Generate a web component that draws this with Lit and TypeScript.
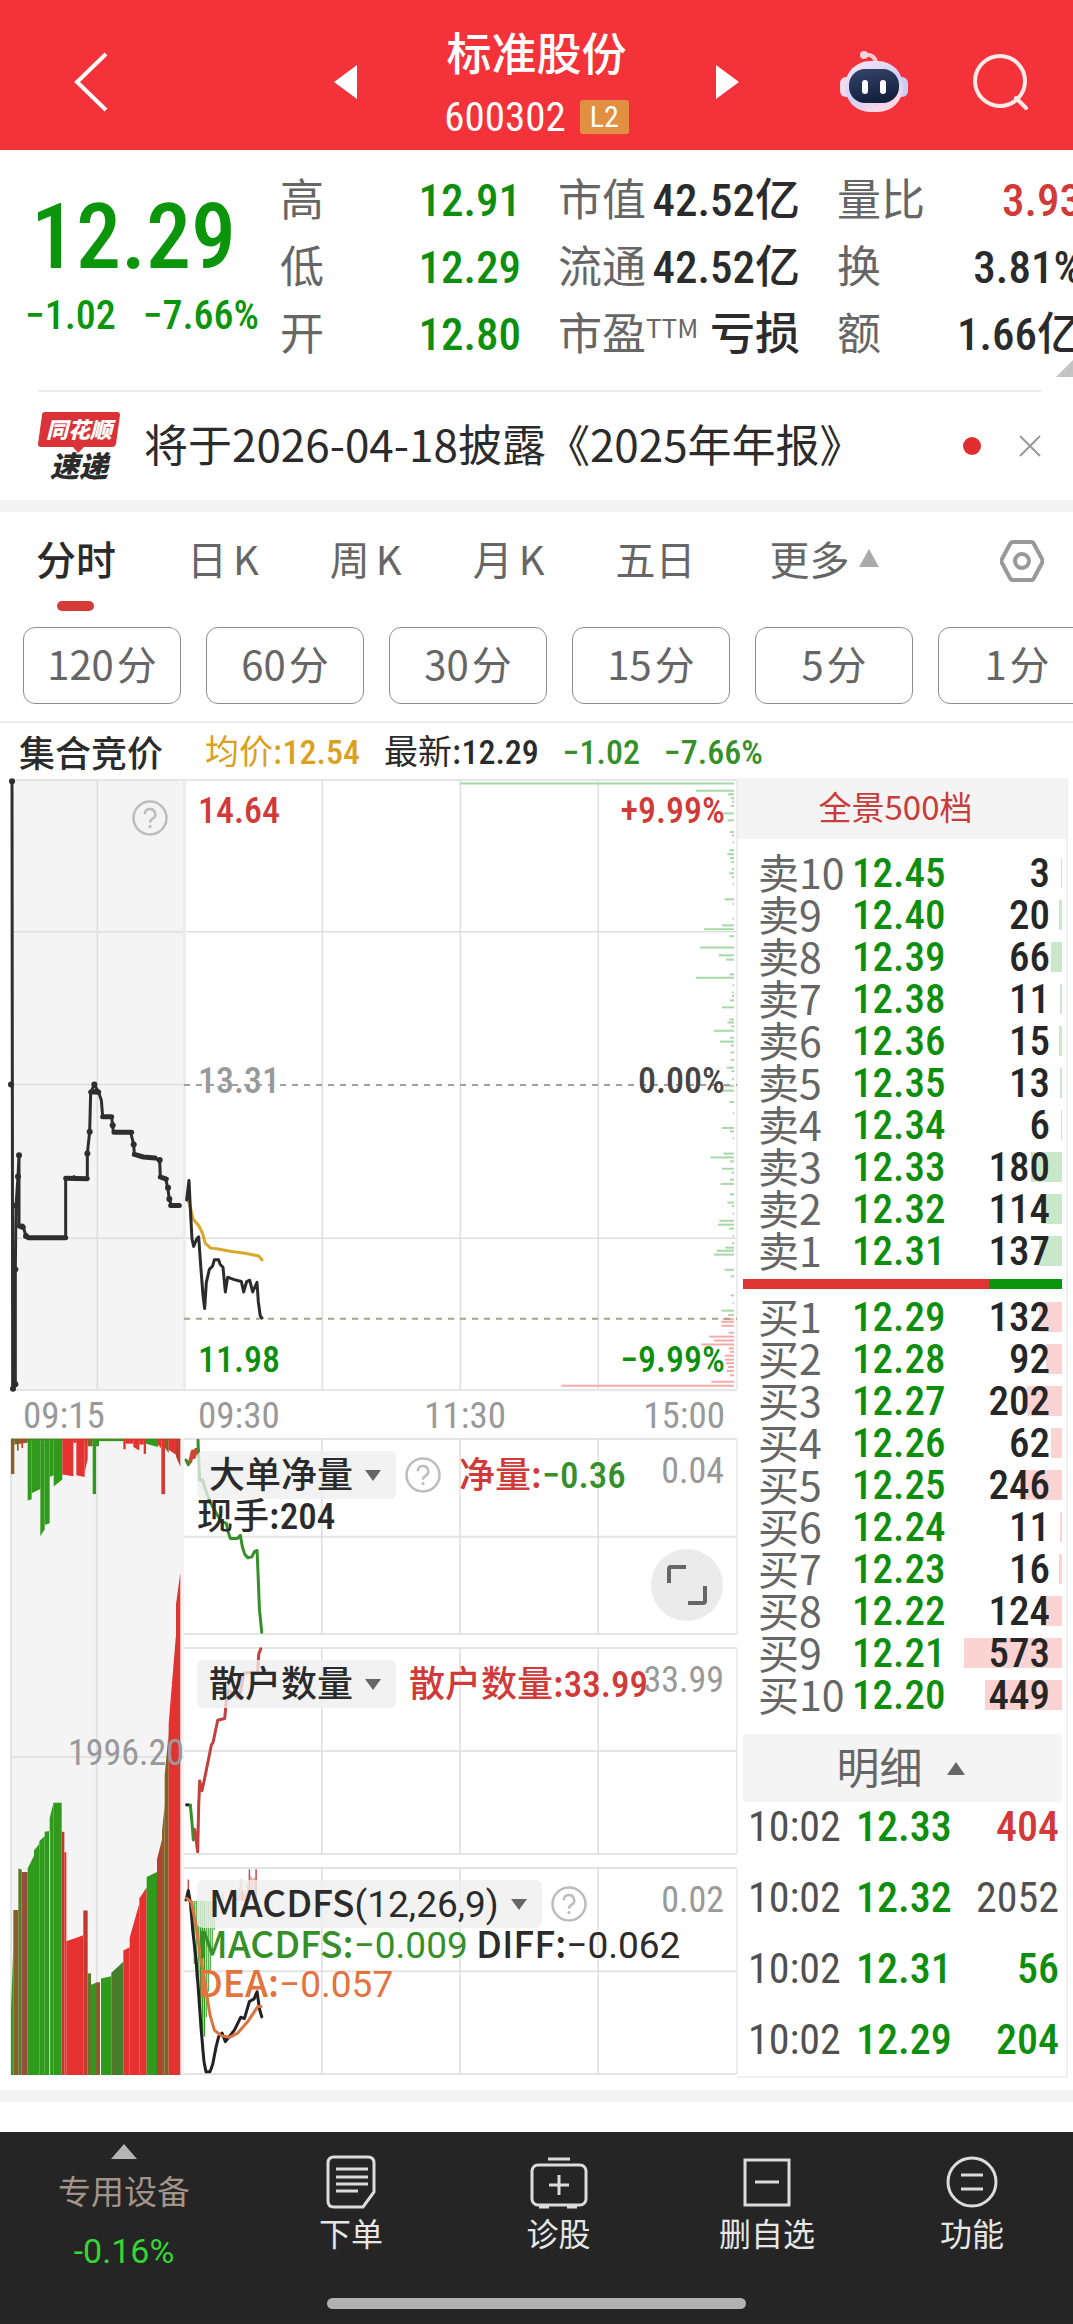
import { LitElement, html, svg, css } from "lit";
import { customElement } from "lit/decorators.js";
import { classMap } from "lit/directives/class-map.js";

type Level = [string, string, number];
type Bar = [number, number, number, number, string];

const SELLS: Level[] = [
  ["卖10", "12.45", 3], ["卖9", "12.40", 20], ["卖8", "12.39", 66], ["卖7", "12.38", 11], ["卖6", "12.36", 15],
  ["卖5", "12.35", 13], ["卖4", "12.34", 6], ["卖3", "12.33", 180], ["卖2", "12.32", 114], ["卖1", "12.31", 137],
];
const BUYS: Level[] = [
  ["买1", "12.29", 132], ["买2", "12.28", 92], ["买3", "12.27", 202], ["买4", "12.26", 62], ["买5", "12.25", 246],
  ["买6", "12.24", 11], ["买7", "12.23", 16], ["买8", "12.22", 124], ["买9", "12.21", 573], ["买10", "12.20", 449],
];
const TRADES: [string, string, string, string][] = [
  ["10:02", "12.33", "404", "up"],
  ["10:02", "12.32", "2052", "flat"],
  ["10:02", "12.31", "56", "down"],
  ["10:02", "12.29", "204", "down"],
];
const STATS: [string, string, string, string][][] = [
  [["高", "", "12.91", "down"], ["低", "", "12.29", "down"], ["开", "", "12.80", "down"]],
  [["市值", "", "42.52亿", "dark"], ["流通", "", "42.52亿", "dark"], ["市盈", "TTM", "亏损", "dark"]],
  [["量比", "", "3.93", "up"], ["换", "", "3.81%", "dark"], ["额", "", "1.66亿", "dark"]],
];
const TABS: [string, string][] = [["分时", ""], ["日", "K"], ["周", "K"], ["月", "K"], ["五日", ""]];
const CHIPS: [string, string][] = [["120", "分"], ["60", "分"], ["30", "分"], ["15", "分"], ["5", "分"], ["1", "分"]];

const GREEN = "#2f9a1c";
const RED = "#e53230";
const BROWN = "#8a5f2a";

/* Resting orders by price: [y, length]. */
const DEPTH_GREEN: [number, number][] = [
  [30, 822], [47, 114], [55, 18], [64, 10], [72, 6], [82, 10], [99, 32], [115, 20], [142, 12], [150, 6], [166, 4],
  [184, 14], [193, 20], [202, 12], [211, 8], [228, 6], [237, 14], [246, 6], [262, 4], [297, 28], [308, 4], [342, 4],
  [357, 36], [366, 90], [382, 14], [408, 102], [426, 46], [436, 24], [470, 14], [478, 114], [495, 4], [512, 5],
  [520, 6], [530, 12], [546, 36], [574, 14], [581, 20], [590, 8], [600, 60], [616, 12], [625, 42], [634, 10],
  [650, 10], [667, 10], [685, 22], [693, 8], [712, 6], [727, 28], [738, 36], [764, 14], [790, 3], [824, 36],
  [832, 12], [848, 4], [883, 32], [892, 70], [901, 12], [918, 36], [927, 8], [943, 12], [953, 40], [977, 12],
  [996, 20], [1004, 6], [1021, 4], [1038, 44], [1047, 48], [1056, 14], [1073, 4], [1090, 6], [1100, 26],
  [1107, 52], [1116, 60], [1151, 28], [1166, 10], [1210, 10], [1228, 4], [1245, 38], [1255, 18],
];
const DEPTH_RED: [number, number][] = [
  [1265, 34], [1271, 38], [1280, 38], [1296, 16], [1305, 74], [1314, 60], [1323, 98], [1332, 16], [1340, 12],
  [1349, 28], [1358, 28], [1366, 24], [1375, 18], [1384, 22], [1394, 12], [1409, 68], [1418, 518],
];

/* Matched volume in the call auction: left, right, top at left, top at right, colour. */
const VOLUME: Bar[] = [
  [35, 42, 1380, 1230, GREEN], [42, 57, 1145, 1145, BROWN], [57, 67, 1048, 1050, "#587a2a"],
  [67, 85, 1056, 1056, "#96503a"], [85, 104, 1048, 1018, GREEN], [104, 120, 1006, 990, GREEN],
  [120, 136, 984, 972, GREEN], [136, 151, 962, 960, GREEN], [151, 162, 930, 896, GREEN],
  [162, 187, 894, 894, GREEN], [187, 195, 962, 962, "#c03a30"], [195, 201, 1010, 1010, RED],
  [201, 252, 1218, 1204, RED], [252, 265, 1146, 1146, "#c03a30"], [265, 275, 1293, 1293, "#587a2a"],
  [275, 290, 1320, 1315, GREEN], [290, 302, 1314, 1314, BROWN], [305, 336, 1305, 1300, GREEN],
  [336, 372, 1292, 1266, "#41802a"], [372, 391, 1240, 1232, RED], [391, 420, 1210, 1130, RED],
  [420, 442, 1118, 1092, RED], [442, 473, 1068, 1056, GREEN], [473, 488, 1026, 980, "#b9402f"],
  [488, 496, 960, 900, BROWN], [496, 508, 830, 730, "#7d6326"], [508, 530, 710, 500, RED],
  [530, 543, 430, 355, "#d93833"],
];
const UNMATCHED: Bar[] = [
  [35, 45, 125, 125, BROWN], [45, 85, 56, 52, "#7d6326"], [53, 58, 70, 70, "#7d6326"], [66, 71, 64, 64, RED],
  [85, 97, 187, 184, GREEN], [97, 123, 170, 160, GREEN], [123, 136, 270, 255, GREEN], [136, 151, 244, 240, GREEN],
  [151, 163, 132, 128, GREEN], [163, 189, 154, 138, GREEN], [189, 222, 126, 130, RED], [222, 231, 52, 52, RED],
  [231, 256, 128, 132, RED], [256, 265, 122, 90, RED], [265, 280, 60, 60, "#7d6326"], [280, 290, 172, 172, GREEN],
  [290, 299, 60, 60, GREEN], [299, 372, 48, 48, GREEN], [372, 379, 67, 67, RED], [379, 402, 54, 54, RED],
  [402, 420, 62, 70, RED], [420, 433, 56, 56, RED], [433, 440, 78, 78, RED], [440, 476, 54, 62, GREEN],
  [476, 486, 56, 66, RED], [486, 497, 172, 172, "#d93833"], [497, 508, 64, 76, "#7d6326"],
  [508, 530, 68, 80, RED], [530, 543, 84, 108, "#c03a30"],
];

const AUCTION =
  "36,25 38,1425 46,1418 46,1150 48,1003 54,936 57,887 57,1050 70,1053 78,1073 85,1078 197,1077 197,940 215,941 222,936 230,941 262,941 262,883 269,833 272,742 283,724 296,742 304,760 308,798 335,798 340,833 392,834 401,862 403,885 430,891 465,893 479,900 481,937 497,941 504,965 508,990 515,1003 538,1003";
const AUCTION_DOTS: [number, number][] = [
  [36, 25], [33, 724], [39, 1425], [46, 1415], [46, 1150], [48, 1003], [54, 936], [57, 887], [66, 1051], [78, 1073],
  [269, 833], [262, 883], [283, 724], [290, 740], [338, 818], [401, 862], [479, 898], [504, 962], [508, 988],
];
const AUCTION_BOLD = [
  "85,1077 197,1077", "197,940 262,941", "272,741 296,741", "308,798 335,798", "342,834 395,834",
  "403,885 430,891 465,893", "481,937 499,942", "512,1003 538,1003", "58,1050 70,1053",
];
const PRICE =
  "560,990 567,945 571,1010 576,1080 581,1097 590,1080 596,1075 603,1150 609,1210 614,1240 619,1180 628,1150 638,1142 643,1128 656,1128 660,1138 669,1145 676,1202 683,1168 700,1173 724,1178 731,1202 740,1178 749,1175 758,1202 771,1180 775,1225 781,1258 786,1262";
const AVERAGE =
  "562,985 572,1010 580,1035 597,1050 607,1066 616,1090 632,1101 655,1103 690,1108 735,1113 776,1119 786,1128";

@customElement("app-root")
export class AppRoot extends LitElement {
  static styles = css`
    :host {
      display: block;
      --sans: "Noto Sans CJK SC", "Noto Sans", sans-serif;
      --num: "Roboto Condensed", "Liberation Sans Narrow", Roboto, "Noto Sans CJK SC", sans-serif;
      --up: #d13a38;
      --down: #0d8f0d;
      --dark: #2b2b2b;
      --mid: #666;
      --light: #999;
      background: #fff;
      color: var(--dark);
      font-family: var(--sans);
      overflow: hidden;
    }
    * { box-sizing: border-box; }
    button, a {
      font: inherit; color: inherit; background: none; border: 0; padding: 0; margin: 0;
      text-decoration: none; cursor: pointer; white-space: nowrap;
    }
    svg { display: block; }
    .up { color: var(--up); }
    .down { color: var(--down); }
    .dark { color: var(--dark); }
    .flat { color: #505050; }

    .top { display: grid; grid-template-columns: 1fr auto 1fr; height: 150px; background: #f33339; color: #fff; }
    .side { display: flex; align-items: center; justify-content: space-between; }
    .side.left { padding: 14px 87px 0 70px; }
    .side.right { padding: 14px 43px 0 87px; }
    .name { text-align: center; padding-top: 20px; }
    .name h1 { margin: 0; font-size: 45px; line-height: 64px; font-weight: 500; }
    .code { display: flex; align-items: center; justify-content: center; gap: 14px; font: 400 41px/66px var(--num); }
    .badge { width: 49px; height: 34px; line-height: 34px; font-size: 30px; background: #e09040; border-radius: 3px; text-align: center; }
    .tools { display: flex; gap: 62px; align-items: center; }

    .quote {
      position: relative; display: grid; grid-template-columns: 218fr 241fr 242fr 245fr; column-gap: 37px;
      padding: 16px 0 23px 25px; margin-right: -9px;
    }
    .last { min-width: 0; color: #0a950a; white-space: nowrap; }
    .price { font: 500 90px/110px var(--num); padding: 17px 0 0 6px; }
    .change { display: flex; gap: 27px; font: 500 40px/44px var(--num); padding-top: 1px; }
    .stats { margin: 0; }
    .stats div { display: flex; justify-content: space-between; height: 67px; white-space: nowrap; }
    .stats dt { font-size: 44px; line-height: 63px; color: var(--mid); }
    .stats dd { margin: 0; font: 500 45px/70px var(--num); }
    .stats sup { font-size: 26px; line-height: 0; vertical-align: 12px; }
    .corner { position: absolute; right: 9px; bottom: 13px; width: 17px; height: 17px; }

    .news { display: flex; align-items: center; height: 110px; margin: 0 32px 0 38px; border-top: 2px solid #ebebeb; }
    .logo { width: 82px; margin-right: 24px; font-weight: 900; font-style: italic; text-align: center; }
    .logo-top { position: relative; height: 36px; line-height: 33px; font-size: 22px; color: #fff; }
    .logo-top svg { position: absolute; inset: 0; }
    .logo-top span { position: relative; }
    .logo-low { font-size: 29px; line-height: 32px; }
    .news p { flex: 1; margin: 0; padding-bottom: 6px; font-size: 44px; line-height: 60px; white-space: nowrap; }
    .dot { width: 18px; height: 18px; border-radius: 50%; background: #e02d2d; margin-right: 38px; }
    .strip { height: 12px; background: #f4f4f4; }

    .tabs { display: flex; gap: 71px; align-items: center; height: 115px; padding: 0 29px 0 36px; font-size: 40px; color: var(--mid); }
    .tabs button { position: relative; height: 115px; padding-bottom: 24px; }
    .tabs .set { padding-bottom: 18px; }
    .tabs i { margin-left: 6px; font-style: normal; }
    .tabs .on { color: var(--dark); font-weight: 500; }
    .tabs .on::after { content: ""; position: absolute; left: 21px; bottom: 16px; width: 37px; height: 10px; border-radius: 5px; background: #d33a38; }
    .tabs .more { display: flex; align-items: center; gap: 9px; margin-left: 3px; margin-right: auto; }
    .chips { display: flex; gap: 25px; padding: 0 0 17px 23px; overflow: hidden; }
    .chips button { flex: 0 0 158px; height: 77px; padding-bottom: 5px; border: 1px solid #8c8c8c; border-radius: 12px; font-size: 40px; color: var(--mid); }
    .chips i { margin-left: 3px; font-style: normal; }

    .info { display: flex; align-items: center; height: 57px; border-top: 2px solid #ececec; padding: 1px 19px 0; font-size: 34px; white-space: nowrap; }
    .info strong { font-size: 36px; font-weight: 500; margin-right: 42px; }
    .info span { margin-right: 24px; }
    .info b { font: 500 34px/50px var(--num); }
    .avg { color: #d9a11e; }

    .market { display: grid; grid-template-columns: 726fr 331fr; padding: 0 5px 12px 11px; }
    .charts { min-width: 0; }
    .main { position: relative; height: 610px; margin-top: 2px; }
    .fill { width: 100%; height: 100%; overflow: visible; }
    .tag { position: absolute; font: 500 36px/40px var(--num); }
    .tag.t { top: 11px; }
    .tag.m { top: 281px; }
    .tag.b { bottom: 10px; }
    .tag.l { left: 187px; }
    .tag.r { right: 12px; }
    .gray { color: var(--light); }
    .soft { color: #444; }
    .hint { width: 36px; height: 36px; }
    .main .hint { position: absolute; top: 20px; left: 121px; }
    .axis { display: grid; grid-template-columns: 174fr 225fr 150fr 149fr; height: 49px; padding: 1px 12px 0 12px; font: 400 37px/50px var(--num); color: var(--light); }
    .axis span:nth-child(4) { text-align: right; }
    .subs { display: grid; grid-template-columns: 173fr 553fr; }
    .auction { position: relative; height: 636px; }
    .auction .tag { right: 0; top: 294px; font-weight: 400; }
    .panels { display: grid; grid-template-rows: 195px 206px 206px; row-gap: 14px; }
    .panel { position: relative; min-width: 0; }
    .panel .fill { position: absolute; inset: 0; }
    .legend { position: relative; padding: 12px 14px 0 13px; white-space: nowrap; font-weight: 500; font-size: 36px; }
    .row { display: flex; align-items: center; height: 48px; }
    .pick { display: flex; align-items: center; gap: 12px; height: 48px; padding: 0 15px 0 12px; border-radius: 6px; background: rgba(238, 238, 238, 0.78); }
    .pick span, .key { line-height: 42px; padding-bottom: 6px; }
    .row .hint { margin-left: 9px; }
    .key { margin-left: 18px; }
    .key.near { margin-left: 13px; }
    .legend .max { position: absolute; right: 13px; top: 12px; font: 400 36px/40px var(--num); }
    .legend b { font: 500 37px/30px var(--num); }
    .macd { font-size: 37px; }
    .macd b { font: 400 37px/30px Roboto, sans-serif; }
    .line { height: 39px; line-height: 28px; }
    .gtext { color: #35902a; }
    .otext { color: #e2733f; }
    .full { position: absolute; right: 14px; bottom: 13px; width: 72px; height: 72px; border-radius: 50%; background: #ebebeb; display: grid; place-items: center; }

    .book { border: 2px solid #f0f0f0; border-top: 0; border-left: 0; padding: 0 4px 0 6px; height: 1300px; }
    .depth { display: block; height: 61px; line-height: 54px; margin: 0 -4px 0 -6px; padding: 0 12px 5px 0; width: calc(100% + 10px); background: #f4f4f4; font-size: 33px; color: #c83c3a; }
    table { width: 100%; border-collapse: collapse; table-layout: fixed; }
    td { padding: 0; white-space: nowrap; }
    .levels td { height: 42px; vertical-align: top; }
    .sell { margin-top: 13px; }
    .buy { margin-top: 7px; }
    .levels .lv { width: 109px; padding-left: 15px; font-size: 41px; line-height: 38px; color: var(--mid); }
    .levels .px { width: 100px; font: 500 41px/42px var(--num); }
    .levels .vol { position: relative; text-align: right; padding-right: 12px; font: 500 41px/42px var(--num); color: #262626; }
    .vol span { position: relative; }
    .bar { position: absolute; right: 0; top: 6px; height: 30px; background: #c9e8c9; }
    .buy .bar { background: #fbd3d3; }
    .ratio { display: flex; height: 10px; margin-top: 7px; background: #0a950a; }
    .ratio i { width: 77%; background: #de3434; }
    .detail { display: flex; align-items: center; justify-content: center; gap: 24px; width: 100%; height: 68px; margin-top: 18px; padding-right: 4px; background: #f4f4f4; font-size: 43px; line-height: 56px; color: var(--mid); }
    .detail span { padding-bottom: 6px; }
    .ticks { margin-top: -11px; }
    .ticks td { height: 71px; line-height: 71px; font-family: var(--num); font-size: 42px; }
    .ticks .tm { width: 113px; padding-left: 5px; color: #505050; }
    .ticks .tp { width: 100px; font-weight: 500; }
    .ticks .tv { text-align: right; padding-right: 3px; font-weight: 500; }
    .ticks .flat { font-weight: 400; }

    .nav { position: relative; display: grid; grid-template-columns: 248fr 206fr 209fr 208fr 202fr; height: 193px; margin-top: 30px; background: #252525; color: #e6e6e6; font-size: 32px; }
    .nav a { display: flex; flex-direction: column; align-items: center; padding-top: 20px; line-height: 40px; }
    .nav .idx { padding-top: 12px; font-size: 33px; color: #a3948b; }
    .nav .idx svg { margin-bottom: 11px; }
    .idx b { font: 400 34px/46px Roboto, sans-serif; color: #33d633; padding-top: 18px; }
    .home { position: absolute; left: 30.5%; right: 30.5%; bottom: 16px; height: 11px; border-radius: 6px; background: #b2b2b2; }
  `;

  private poly(points: string, color: string, width = 3) {
    return svg`<polyline points=${points} fill="none" stroke=${color} stroke-width=${width} stroke-linejoin="round" stroke-linecap="round" vector-effect="non-scaling-stroke"></polyline>`;
  }

  private seg(x1: number, y1: number, x2: number, y2: number, color = "#dedede", width = 1.5, dash = "none") {
    return svg`<line x1=${x1} y1=${y1} x2=${x2} y2=${y2} stroke=${color} stroke-width=${width} stroke-dasharray=${dash} vector-effect="non-scaling-stroke"></line>`;
  }

  private hint() {
    return svg`<svg class="hint" viewBox="0 0 36 36" fill="none" stroke="#bdbdbd" stroke-width="2.5" role="img" aria-label="帮助">
      <circle cx="18" cy="18" r="16.5"></circle>
      <path d="M12.8 14.2a5.2 5.2 0 1 1 7.6 4.6c-1.6.9-2.4 1.8-2.4 4"></path>
      <circle cx="18" cy="26.6" r="1.6" fill="#bdbdbd" stroke="none"></circle>
    </svg>`;
  }

  private down() {
    return html`<svg width="16" height="11" viewBox="0 0 16 11"><path d="M0 0h16L8 11z" fill="#666"></path></svg>`;
  }

  private mainChart() {
    return html`<svg class="fill" viewBox="33 22 2178 1406" preserveAspectRatio="none" aria-hidden="true">
      <rect x="33" y="22" width="519" height="1406" fill="#f4f4f4"></rect>
      ${[22, 372, 1078, 1428].map((y) => this.seg(33, y, 2211, y))}
      ${this.seg(33, 724, 552, 724)}
      ${[292, 967, 1381, 1795].map((x) => this.seg(x, 22, x, 1428))}
      ${this.seg(553, 22, 553, 1428, "#ebebeb", 3)}
      ${this.seg(2211, 22, 2211, 1428, "#ececec", 2)}
      ${DEPTH_GREEN.map(([y, w]) => this.seg(2202 - w, y, 2202, y, "#a5d9a5", 2))}
      ${DEPTH_RED.map(([y, w]) => this.seg(2202 - w, y, 2202, y, "#f4aaa8", 2))}
      ${this.seg(552, 725, 2211, 725, "#a0a0a0", 2, "6 6")}
      ${this.seg(552, 1264, 2211, 1264, "#a8a386", 2, "6 6")}
      ${this.poly(AUCTION, "#2e2e2e", 3)}
      ${AUCTION_BOLD.map((p) => this.poly(p, "#2e2e2e", 5))}
      ${AUCTION_DOTS.map(([x, y]) => this.poly(`${x},${y} ${x + 0.1},${y}`, "#2e2e2e", 6))}
      ${this.poly(AVERAGE, "#d8a82c", 3)}
      ${this.poly(PRICE, "#2b2b2b", 3)}
    </svg>`;
  }

  private auctionChart() {
    return html`<svg class="fill" viewBox="35 43 519 1488" preserveAspectRatio="none" aria-hidden="true">
      <rect x="35" y="43" width="519" height="1488" fill="#f4f4f4"></rect>
      ${this.seg(292, 43, 292, 1531)} ${this.seg(35, 787, 554, 787)} ${this.seg(35, 43, 35, 1531)}
      ${this.seg(35, 44, 543, 44, "#8a5f2a", 2)}
      ${VOLUME.map(([a, b, l, r, c]) => svg`<polygon points="${a},1531 ${a},${l} ${b},${r} ${b},1531" fill=${c}></polygon>`)}
      ${this.seg(151, 960, 151, 1531, "#b9e3b0", 1)}
      ${this.seg(272, 1320, 272, 1531, BROWN, 1)}
      ${this.seg(341, 1300, 341, 1531, BROWN, 1)}
      ${this.seg(366, 1275, 366, 1531, BROWN, 1)}
      ${UNMATCHED.map(([a, b, l, r, c]) => svg`<polygon points="${a},43 ${a},${l} ${b},${r} ${b},43" fill=${c}></polygon>`)}
    </svg>`;
  }

  private panelGrid(top: number, mid: number, bottom: number, series: unknown) {
    return html`<svg class="fill" viewBox="554 ${top} 1657 ${bottom - top}" preserveAspectRatio="none" aria-hidden="true">
      ${[top, mid, bottom].map((y) => this.seg(554, y, 2211, y, "#e4e4e4", 2))}
      ${[967, 1381, 1795].map((x) => this.seg(x, top, x, bottom))}
      ${this.seg(2211, top, 2211, bottom, "#ececec", 2)}
      ${series}
    </svg>`;
  }

  private macdBars() {
    const falls = [1150, 1190, 1270, 1305, 1330, 1390, 1475, 1440, 1395, 1335, 1285, 1240, 1190, 1150];
    const rises = [1112, 1100, 1090, 1072, 1098, 1105, 1100, 1082, 1048, 1065, 1070, 1068, 1048];
    return svg`
      ${falls.map((y, i) => this.seg(573 + i * 6, 1122, 573 + i * 6, y, i > 4 && i < 8 ? "#2f9a1c" : "#62b055", 1.5))}
      ${rises.map((y, i) => this.seg(710 + i * 5, 1122, 710 + i * 5, y, i % 4 === 0 ? "#c94a4a" : "#f09a98", 1.5))}
      ${this.seg(567, 1072, 567, 1105, "#c94a4a", 1.5)}
      ${this.seg(670, 1104, 670, 1122, "#f09a98", 1.5)}`;
  }

  private levels(rows: Level[], kind: string) {
    return html`<table class="levels ${kind}">
      <tbody>
        ${rows.map(([name, price, vol]) => html`<tr>
          <td class="lv">${name}</td>
          <td class="px down">${price}</td>
          <td class="vol"><i class="bar" style="width:${Math.max(1, Math.round(vol * 0.171))}px"></i><span>${vol}</span></td>
        </tr>`)}
      </tbody>
    </table>`;
  }

  private header() {
    return html`<header class="top">
      <div class="side left">
        <button aria-label="返回"><svg width="44" height="60" viewBox="0 0 44 60" fill="none" stroke="#fff" stroke-width="4"><path d="M36 2 7 30l29 28"></path></svg></button>
        <button aria-label="上一只"><svg width="23" height="34" viewBox="0 0 23 34"><path d="M23 0v34L0 17z" fill="#fff"></path></svg></button>
      </div>
      <div class="name">
        <h1>标准股份</h1>
        <div class="code">600302<span class="badge">L2</span></div>
      </div>
      <div class="side right">
        <button aria-label="下一只"><svg width="23" height="34" viewBox="0 0 23 34"><path d="M0 0v34l23-17z" fill="#fff"></path></svg></button>
        <div class="tools">
          <button aria-label="智能助手">
            <svg width="68" height="64" viewBox="0 0 68 64">
              <defs>
                <linearGradient id="shell" x1="0" y1="0" x2="0.6" y2="1"><stop offset="0" stop-color="#ffe9f2"></stop><stop offset="0.6" stop-color="#cfd0fa"></stop><stop offset="1" stop-color="#ffd9e2"></stop></linearGradient>
                <linearGradient id="face" x1="0" y1="0" x2="0.3" y2="1"><stop offset="0" stop-color="#35456b"></stop><stop offset="1" stop-color="#14203f"></stop></linearGradient>
              </defs>
              <path d="M24 5c7-1 12 2 12 9" fill="none" stroke="#ffc9cf" stroke-width="4"></path>
              <circle cx="24" cy="5" r="4" fill="#ffd5d9"></circle>
              <rect x="0" y="27" width="12" height="20" rx="6" fill="#f4d9ea"></rect>
              <rect x="56" y="27" width="12" height="20" rx="6" fill="#c6cff8"></rect>
              <rect x="5" y="11" width="58" height="51" rx="25" fill="url(#shell)"></rect>
              <rect x="9" y="19" width="50" height="34" rx="16" fill="url(#face)"></rect>
              <rect x="22" y="30" width="6" height="14" rx="3" fill="#fff"></rect>
              <rect x="40" y="30" width="6" height="14" rx="3" fill="#fff"></rect>
            </svg>
          </button>
          <button aria-label="搜索"><svg width="60" height="60" viewBox="0 0 60 60" fill="none" stroke="#ffeaea" stroke-width="4"><circle cx="30" cy="29" r="25"></circle><path d="m46 46 10 10" stroke-linecap="round"></path></svg></button>
        </div>
      </div>
    </header>`;
  }

  private navBar() {
    return html`<nav class="nav">
      <a class="idx" href="#index">
        <svg width="26" height="15" viewBox="0 0 26 15"><path d="M13 0 26 15H0z" fill="#b5b5b5"></path></svg>
        专用设备<b>-0.16%</b>
      </a>
      <a href="#order"><svg width="60" height="60" viewBox="0 0 60 60" fill="none" stroke="#dcdcdc" stroke-width="3"><path d="M13 5h34q6 0 6 6v29L42 55H13q-6 0-6-6V11q0-6 6-6z"></path><path d="M15 17h32M15 25h32M15 32h32M15 39h22"></path></svg>下单</a>
      <a href="#diagnose"><svg width="60" height="60" viewBox="0 0 60 60" fill="none" stroke="#dcdcdc" stroke-width="3"><rect x="3" y="13" width="54" height="40" rx="6"></rect><path d="M19 7h22M30 23v20M20 33h20M10 55h10M38 55h10"></path></svg>诊股</a>
      <a href="#remove"><svg width="60" height="60" viewBox="0 0 60 60" fill="none" stroke="#dcdcdc" stroke-width="3"><rect x="8" y="8" width="44" height="45"></rect><path d="M18 30h24"></path></svg>删自选</a>
      <a href="#tools"><svg width="60" height="60" viewBox="0 0 60 60" fill="none" stroke="#dcdcdc" stroke-width="3"><circle cx="30" cy="30" r="24"></circle><path d="M19 23h22M19 37h22"></path></svg>功能</a>
      <i class="home"></i>
    </nav>`;
  }

  render() {
    return html`
      ${this.header()}
      <section class="quote">
        <div class="last">
          <div class="price">12.29</div>
          <div class="change"><span>−1.02</span><span>−7.66%</span></div>
        </div>
        ${STATS.map((group) => html`<dl class="stats">
          ${group.map(([label, sup, value, tone]) => html`<div><dt>${label}${sup ? html`<sup>${sup}</sup>` : ""}</dt><dd class=${tone}>${value}</dd></div>`)}
        </dl>`)}
        <svg class="corner" viewBox="0 0 17 17"><path d="M17 0v17H0z" fill="#c4c4c4"></path></svg>
      </section>
      <section class="news">
        <div class="logo">
          <div class="logo-top">
            <svg width="82" height="42" viewBox="0 0 82 42"><path d="M7 0h72q3 0 3 3l-4 29q-1 3-4 3H46l-6 6-5-6H3q-3 0-3-3L4 3q0-3 3-3z" fill="#d93338"></path></svg>
            <span>同花顺</span>
          </div>
          <div class="logo-low">速递</div>
        </div>
        <p>将于2026-04-18披露《2025年年报》</p>
        <i class="dot"></i>
        <button aria-label="关闭"><svg width="22" height="22" viewBox="0 0 22 22" stroke="#999" stroke-width="2"><path d="M1 1l20 20M21 1 1 21"></path></svg></button>
      </section>
      <div class="strip"></div>
      <nav class="tabs">
        ${TABS.map(([t, k], i) => html`<button class=${classMap({ on: i === 0 })}>${t}${k ? html`<i>${k}</i>` : ""}</button>`)}
        <button class="more">更多<svg width="20" height="18" viewBox="0 0 20 18"><path d="M10 0 20 18H0z" fill="#aaa"></path></svg></button>
        <button class="set" aria-label="设置"><svg width="44" height="42" viewBox="0 0 44 42" fill="none" stroke="#999" stroke-width="4"><path d="M13 2h18q2 0 3 2l8 15q1 2 0 4l-8 15q-1 2-3 2H13q-2 0-3-2L2 23q-1-2 0-4l8-15q1-2 3-2z"></path><circle cx="22" cy="21" r="7"></circle></svg></button>
      </nav>
      <div class="chips">${CHIPS.map(([n, u]) => html`<button>${n}<i>${u}</i></button>`)}</div>
      <div class="info">
        <strong>集合竞价</strong><span class="avg">均价:<b>12.54</b></span><span>最新:<b>12.29</b></span>
        <span class="gtext"><b>−1.02</b></span><span class="gtext"><b>−7.66%</b></span>
      </div>
      <section class="market">
        <div class="charts">
          <div class="main">
            ${this.mainChart()}
            ${this.hint()}
            <span class="tag t l up">14.64</span><span class="tag t r up">+9.99%</span>
            <span class="tag m l gray">13.31</span><span class="tag m r soft">0.00%</span>
            <span class="tag b l down">11.98</span><span class="tag b r down">−9.99%</span>
          </div>
          <div class="axis"><span>09:15</span><span>09:30</span><span>11:30</span><span>15:00</span></div>
          <div class="subs">
            <div class="auction">${this.auctionChart()}<span class="tag gray">1996.20</span></div>
            <div class="panels">
              <div class="panel">
                ${this.panelGrid(43, 271, 498, svg`
                  ${this.poly("560,92 567,103 573,95", "#35902a")}
                  ${this.poly("573,95 580,72 584,85 590,68 596,70", "#c94a30", 4)}
                  ${this.poly("596,46 597,70 601,140 609,138 620,165 632,190 650,215 665,235 681,240 687,262 693,275 714,275 723,268 729,295 736,312 745,320 757,318 766,305 773,303 776,360 780,440 787,494", "#35902a")}`)}
                <div class="legend">
                  <div class="row"><button class="pick"><span>大单净量</span>${this.down()}</button>${this.hint()}<span class="key up">净量:<b class="gtext">−0.36</b></span></div>
                  <div class="line">现手:<b>204</b></div>
                  <span class="max gray">0.04</span>
                </div>
                <button class="full" aria-label="全屏"><svg width="40" height="42" viewBox="0 0 40 42" fill="none" stroke="#666" stroke-width="4"><path d="M2 19V5q0-2 2-2h15M38 22v15q0 2-2 2H21"></path></svg></button>
              </div>
              <div class="panel">
                ${this.panelGrid(531, 772, 1013, svg`
                  ${this.poly("562,898 573,899", "#222")}
                  ${this.poly("573,899 578,940 582,980 586,956", "#35902a")}
                  ${this.poly("586,956 591,985 595,1008 598,900 601,842 608,865 620,820 636,758 641,752 655,700 676,696 680,660 687,630 720,650 733,590 760,588 774,590 778,545 784,533", "#c43f3e")}`)}
                <div class="legend">
                  <div class="row"><button class="pick"><span>散户数量</span>${this.down()}</button><span class="key near up">散户数量:<b>33.99</b></span></div>
                  <span class="max gray">33.99</span>
                </div>
              </div>
              <div class="panel">
                ${this.panelGrid(1045, 1287, 1528, svg`
                  ${this.macdBars()}
                  ${this.poly("560,1120 567,1098 574,1130 580,1190 590,1260 597,1330 605,1420 614,1500 620,1523 632,1523 640,1505 650,1465 658,1440 668,1432 678,1452 690,1440 705,1425 724,1395 735,1398 750,1358 764,1352 773,1335 780,1375 787,1394", "#222")}
                  ${this.poly("562,1116 576,1125 590,1180 605,1260 620,1330 632,1390 645,1425 665,1438 690,1442 715,1432 745,1405 775,1370 785,1370", "#dd7440")}`)}
                <div class="legend macd">
                  <div class="row"><button class="pick"><span>MACDFS<b>(12,26,9)</b></span>${this.down()}</button>${this.hint()}</div>
                  <div class="line"><span class="gtext">MACDFS:<b>−0.009</b></span> DIFF:<b>−0.062</b></div>
                  <div class="line otext">DEA:<b>−0.057</b></div>
                  <span class="max gray">0.02</span>
                </div>
              </div>
            </div>
          </div>
        </div>
        <aside class="book">
          <button class="depth">全景500档</button>
          ${this.levels(SELLS, "sell")}
          <div class="ratio"><i></i></div>
          ${this.levels(BUYS, "buy")}
          <button class="detail"><span>明细</span><svg width="18" height="13" viewBox="0 0 18 13"><path d="M9 0l9 13H0z" fill="#666"></path></svg></button>
          <table class="ticks">
            <tbody>
              ${TRADES.map(([t, p, v, tone]) => html`<tr><td class="tm">${t}</td><td class="tp down">${p}</td><td class="tv ${tone}">${v}</td></tr>`)}
            </tbody>
          </table>
        </aside>
      </section>
      <div class="strip"></div>
      ${this.navBar()}
    `;
  }
}
